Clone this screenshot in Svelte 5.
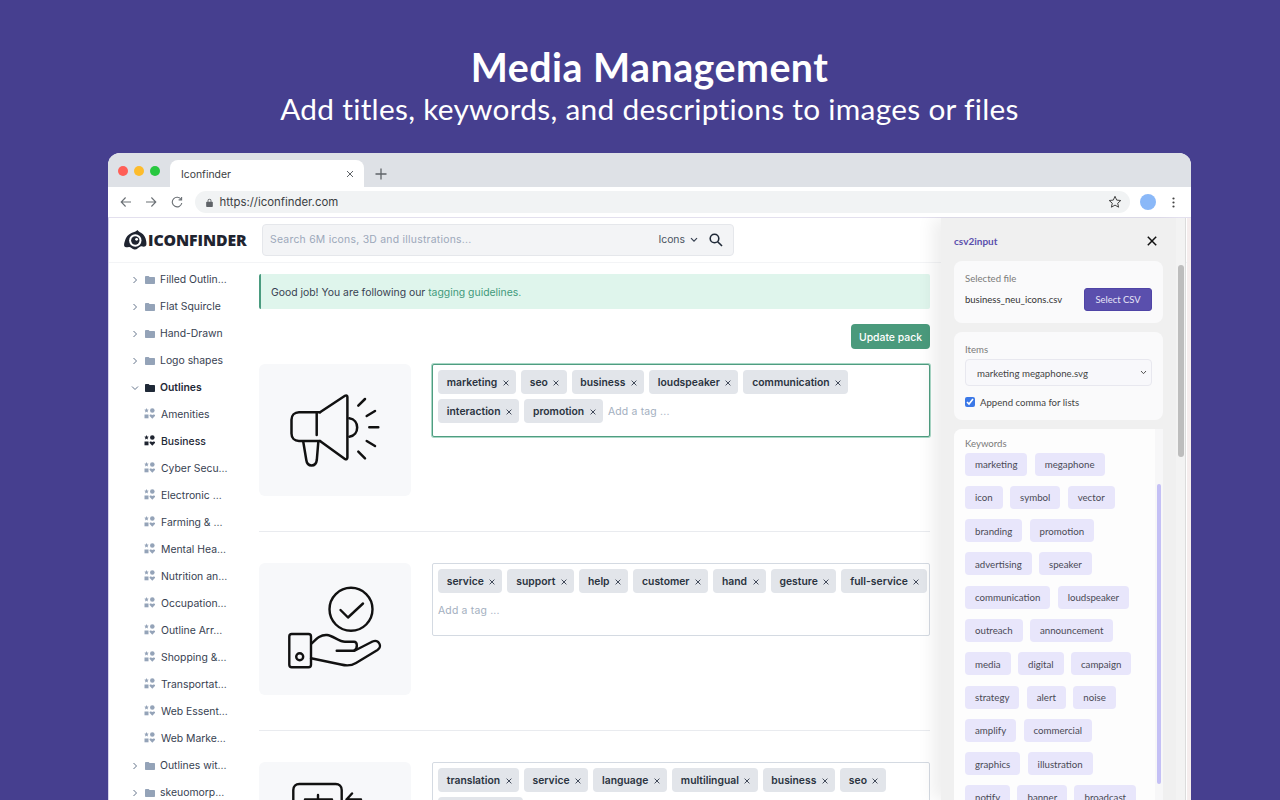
<script>
  const folders1 = ['Filled Outlin…', 'Flat Squircle', 'Hand-Drawn', 'Logo shapes'];
  const packs = ['Amenities', 'Business', 'Cyber Secu…', 'Electronic …', 'Farming & …', 'Mental Hea…', 'Nutrition an…', 'Occupation…', 'Outline Arr…', 'Shopping &…', 'Transportat…', 'Web Essent…', 'Web Marke…'];
  const folders2 = ['Outlines wit…', 'skeuomorp…'];
  const tags1 = ['marketing', 'seo', 'business', 'loudspeaker', 'communication', 'interaction', 'promotion'];
  const tags2 = ['service', 'support', 'help', 'customer', 'hand', 'gesture', 'full-service'];
  const tags3 = ['translation', 'service', 'language', 'multilingual', 'business', 'seo', 'localization'];
  const keywords = ['marketing', 'megaphone', 'icon', 'symbol', 'vector', 'branding', 'promotion', 'advertising', 'speaker', 'communication', 'loudspeaker', 'outreach', 'announcement', 'media', 'digital', 'campaign', 'strategy', 'alert', 'noise', 'amplify', 'commercial', 'graphics', 'illustration', 'notify', 'banner', 'broadcast'];
</script>

{#snippet folder(name, open)}
  <div class="side-row" class:bold={open}>
    <svg class="chev" viewBox="0 0 8 8" width="8" height="8" fill="none" stroke="#64748b" stroke-width="1">
      {#if open}<path d="M1 2.500 4 5.500 7 2.500" />{:else}<path d="M2.500 1 5.500 4 2.500 7" />{/if}
    </svg>
    <svg class="folder" viewBox="0 0 10 8" width="10" height="8" fill={open ? '#1f2937' : '#94a3b8'}>
      <path d="M0 1c0-.5.4-1 1-1h2.600l1 1H9c.6 0 1 .4 1 1v5c0 .6-.4 1-1 1H1c-.6 0-1-.4-1-1z" />
    </svg>
    <span>{name}</span>
  </div>
{/snippet}

{#snippet taglist(tags)}
  {#each tags as t}
    <span class="tag">{t}<svg viewBox="0 0 7 7" width="6" height="6" stroke="#374151" stroke-width="1.100"><path d="M.7.7 6.300 6.300M6.300.7.7 6.300" /></svg></span>
  {/each}
  <span class="adder">Add a tag ...</span>
{/snippet}

<div class="stage">
  <header class="hero">
    <h1>Media Management</h1>
    <p>Add titles, keywords, and descriptions to images or files</p>
  </header>

  <div class="window">
    <div class="tabstrip">
      <div class="lights"><i class="red"></i><i class="yellow"></i><i class="green"></i></div>
      <div class="tab">
        <span>Iconfinder</span>
        <svg viewBox="0 0 8 8" width="8" height="8" stroke="#5f6368" stroke-width="1"><path d="M1 1l6 6M7 1 1 7" /></svg>
      </div>
      <svg class="plus" viewBox="0 0 12 12" width="12" height="12" stroke="#5f6368" stroke-width="1.300"><path d="M6 .5v11M.5 6h11" /></svg>
    </div>

    <div class="toolbar">
      <svg class="nav" viewBox="0 0 12 12" width="12" height="12" fill="none" stroke="#6b7075" stroke-width="1.100"><path d="M11 6H1.200M5.600 1.500 1.200 6l4.400 4.500" /></svg>
      <svg class="nav" viewBox="0 0 12 12" width="12" height="12" fill="none" stroke="#6b7075" stroke-width="1.100"><path d="M1 6h9.800M6.400 1.500 10.800 6l-4.400 4.500" /></svg>
      <svg class="nav" viewBox="0 0 12 12" width="12" height="12" fill="none" stroke="#6b7075" stroke-width="1.100"><path d="M10.200 3.600A4.800 4.800 0 1 0 10.800 7" /><path d="M10.600 .9v3H7.600" /></svg>
      <div class="omnibox">
        <svg viewBox="0 0 8 10" width="7" height="9" fill="#5f6368"><path d="M1.800 4V2.800a2.200 2.200 0 0 1 4.400 0V4H7c.4 0 .8.3.8.8v4.400c0 .5-.4.8-.8.8H1c-.4 0-.8-.3-.8-.8V4.800c0-.5.4-.8.8-.8zM2.800 4h2.400V2.800a1.200 1.200 0 0 0-2.400 0z" /></svg>
        <span>https://iconfinder.com</span>
        <svg class="star" viewBox="0 0 14 14" width="14" height="14" fill="none" stroke="#444" stroke-width="1"><path d="M7 1.300 8.700 5.100l4.100.4-3.100 2.700.9 4-3.600-2.100-3.600 2.100.9-4L1.200 5.500l4.100-.4z" /></svg>
      </div>
      <i class="avatar"></i>
      <svg class="dots" viewBox="0 0 3 11" width="3" height="11" fill="#444"><circle cx="1.500" cy="1.500" r="1.100" /><circle cx="1.500" cy="5.500" r="1.100" /><circle cx="1.500" cy="9.500" r="1.100" /></svg>
    </div>

    <div class="viewport">
      <div class="page">
        <div class="sitehead">
          <div class="logo">
            <svg viewBox="0 0 23 20" width="23" height="20">
              <path fill="#1f2430" d="M13.500 0C14 1.200 15.500 2 17 2.800 20 4.500 21.700 7.500 22.200 11c.3 2.500.6 4.500-.9 5.300-1.700.9-3.200-.4-4.800.2C14.500 17.400 13 19.800 10.500 19.500 8 19.200 7.500 17.200 5.500 17 3.500 16.800 1.500 18 .5 16.500-.5 15 .5 12.500 1.200 10 2 7 4.200 4.500 7 3.200 9 2.300 11.500 2 13.500 0z" />
              <circle cx="11.300" cy="10.500" r="6.200" fill="#fff" />
              <circle cx="11.300" cy="10.500" r="4.200" fill="#1f2430" />
              <circle cx="12.600" cy="9.300" r="1.400" fill="#fff" />
            </svg>
            <span>ICONFINDER</span>
          </div>
          <div class="search">
            <span class="ph">Search 6M icons, 3D and illustrations...</span>
            <span class="kind">Icons</span>
            <svg class="kind-chev" viewBox="0 0 8 6" width="8" height="6" fill="none" stroke="#374151" stroke-width="1.200"><path d="M1 1.200 4 4.200 7 1.200" /></svg>
            <svg class="mag" viewBox="0 0 14 14" width="14" height="14" fill="none" stroke="#1f2937" stroke-width="1.600"><circle cx="5.500" cy="5.500" r="4.300" /><path d="M8.700 8.700 13 13" /></svg>
          </div>
        </div>

        <div class="columns">
          <nav class="sidebar">
            {#each folders1 as f}{@render folder(f, false)}{/each}
            {@render folder('Outlines', true)}
            {#each packs as p}
              <div class="side-row pack" class:current={p === 'Business'}>
                <svg viewBox="0 0 11 11" width="11" height="11">
                  <path d="M2.500 0l.7 1.500 1.600.2-1.200 1.100.3 1.700-1.400-.8-1.400.8.3-1.700L.2 1.700l1.600-.2z" />
                  <circle cx="8.300" cy="2.500" r="2.300" />
                  <rect x=".5" y="6.500" width="4" height="3.800" />
                  <path d="M8.300 10.800 5.900 8.200c-.9-1 .1-2 1.100-1.700l1.300.6 1.300-.6c1-.3 2 .7 1.100 1.700z" />
                </svg>
                <span>{p}</span>
              </div>
            {/each}
            {#each folders2 as f}{@render folder(f, false)}{/each}
          </nav>

          <main class="main">
            <div class="alert">Good job! You are following our <a href="#guide">tagging guidelines.</a></div>
            <div class="actions"><button type="button">Update pack</button></div>

            <section class="row">
              <div class="thumb">
                <svg viewBox="0 0 152 132" width="152" height="132" fill="none" stroke="#111" stroke-width="2.500" stroke-linecap="round" stroke-linejoin="round">
                  <path d="M61 48.300H40c-4.500 0-7.500 3.200-7.500 7.500V69.500c0 4.500 3 7.500 7.500 7.500h21" />
                  <path d="M61 48.300 86 31.800c1.300-.8 2.400-.2 2.400 1.200V93.500c0 1.500-1.200 2.300-2.500 1.500L61 77" />
                  <path d="M57.700 49.500V71" />
                  <path d="M44.300 78 47.300 96c1 7.300 9.600 7.300 10.500 0L59.300 78" />
                  <path d="M90.300 54.300c10.500 1.500 10.500 17 0 18.400" />
                  <path d="M99.300 41.700 106 35M107.700 52 116 47M110.300 63.300H119.300M107.700 77 116 82M99.300 87.700 106 94.300" />
                </svg>
              </div>
              <div class="tagbox active">{@render taglist(tags1)}</div>
            </section>

            <section class="row">
              <div class="thumb">
                <svg viewBox="0 0 152 132" width="152" height="132" fill="none" stroke="#111" stroke-width="2.400" stroke-linecap="round" stroke-linejoin="round">
                  <circle cx="92" cy="46.300" r="21.500" />
                  <path d="M81.500 47 89 54.500 104 40.500" />
                  <rect x="30.300" y="71" width="21.700" height="33.300" rx="2.500" />
                  <circle cx="40.700" cy="93.700" r="3.500" />
                  <path d="M52.700 80.500C58 75 62 71.500 68 72c6 .5 12 6.700 18 6.700h9c3.600 0 3.800 6.500.5 8.500" />
                  <path d="M77.700 87.700H95.500L113.500 78.500c6-2.500 10.500 5 5 8.500L97 100c-5 3-10 2.800-15 1.500L52 95.300" />
                </svg>
              </div>
              <div class="tagbox">{@render taglist(tags2)}</div>
            </section>

            <section class="row">
              <div class="thumb">
                <svg viewBox="0 0 152 132" width="152" height="132" fill="none" stroke="#111" stroke-width="2.400" stroke-linecap="round" stroke-linejoin="round">
                  <path d="M34.300 50V28c0-3.500 2.500-6 6-6h36.400c3.500 0 6 2.500 6 6v22" />
                  <path d="M46 37.500H73M59 33V37.500" />
                  <path d="M87.500 37.500 93 31.500M87.500 37.500 102 37.500" />
                </svg>
              </div>
              <div class="tagbox">{@render taglist(tags3)}</div>
            </section>
          </main>
        </div>
      </div>

      <aside class="panel">
        <div class="panel-body">
          <div class="panel-head">
            <strong>csv2input</strong>
            <svg viewBox="0 0 10 10" width="10" height="10" stroke="#111" stroke-width="1.500"><path d="M.8.8l8.400 8.400M9.200.8.8 9.200" /></svg>
          </div>

          <div class="card file">
            <div class="label">Selected file</div>
            <div class="file-row">
              <span>business_neu_icons.csv</span>
              <button type="button">Select CSV</button>
            </div>
          </div>

          <div class="card items">
            <div class="label">Items</div>
            <div class="select">
              <span>marketing megaphone.svg</span>
              <svg viewBox="0 0 8 6" width="7" height="5" fill="none" stroke="#444" stroke-width="1.100"><path d="M1 1.200 4 4.400 7 1.200" /></svg>
            </div>
            <label class="check"><input type="checkbox" checked /><span>Append comma for lists</span></label>
          </div>

          <div class="keywords">
            <div class="kw-inner">
              <div class="label">Keywords</div>
              <div class="chips">
                {#each keywords as k}<span class="chip">{k}</span>{/each}
              </div>
            </div>
            <div class="kw-track"><i></i></div>
          </div>
        </div>
        <div class="panel-scroll"><i></i></div>
      </aside>
    </div>
  </div>
</div>

<style>
  :global(body) { margin: 0; background: #463f8f; overflow: hidden; }
  .stage { height: 800px; overflow: hidden; background: #463f8f; padding-left: 108px; width: 1172px; font-family: Inter, sans-serif; }
  .hero { width: 1083px; height: 153px; padding-top: 42px; box-sizing: border-box; text-align: center; color: #fff; font-family: Lato, sans-serif; }
  .hero h1 { margin: 0; font-size: 39.300px; line-height: 50px; font-weight: 700; letter-spacing: .5px; }
  .hero p { margin: -3px 0 0; font-size: 29.800px; line-height: 40px; font-weight: 400; letter-spacing: .3px; }

  .window { width: 1083px; height: 647px; background: #fff; border-radius: 12px 12px 0 0; overflow: hidden; display: flex; flex-direction: column; }
  .tabstrip { height: 34px; background: #dee1e6; display: flex; align-items: flex-end; flex: none; }
  .lights { display: flex; gap: 6px; align-self: flex-start; margin: 13px 0 0 10px; width: 52px; }
  .lights i { width: 10px; height: 10px; border-radius: 50%; display: block; }
  .red { background: #ff5f57; }
  .yellow { background: #fdbc2c; }
  .green { background: #28c840; }
  .tab { width: 194px; height: 27px; box-sizing: border-box; background: #fff; border-radius: 8px 8px 0 0; display: flex; align-items: center; justify-content: space-between; padding: 1px 10px 0 11px; font-size: 10.400px; color: #3c4043; }
  .plus { margin: 0 0 7px 11px; }

  .toolbar { height: 30px; flex: none; display: flex; align-items: center; padding-left: 12px; background: #fff; box-sizing: border-box; }
  .nav { margin-right: 13px; }
  .nav:nth-child(2) { margin-right: 14px; }
  .nav:nth-child(3) { margin-right: 11.500px; }
  .omnibox { width: 935px; height: 22px; background: #f1f3f4; border-radius: 11px; display: flex; align-items: center; padding: 0 8px 0 11px; box-sizing: border-box; font-size: 11.400px; color: #3c4043; gap: 7px; font-family: Inter, sans-serif; }
  .star { margin-left: auto; }
  .avatar { width: 16px; height: 16px; border-radius: 50%; background: #8ab8f8; margin-left: 10px; display: block; }
  .dots { margin-left: 16px; }

  .viewport { flex: 1; position: relative; min-height: 0; overflow: hidden; background: #f5eded; padding-right: 4px; box-shadow: inset 0 1px 0 #e3e0ee; }
  .page { height: 100%; background: #fff; border-left: 1px solid #d6d3ea; border-top: 1px solid #e3e0ee; box-sizing: border-box; }
  .sitehead { height: 45px; padding-bottom: 1px; display: flex; align-items: center; border-bottom: 1px solid #f3f4f6; box-sizing: border-box; }
  .logo { display: flex; align-items: center; margin-left: 15px; width: 138px; gap: 1px; font-family: "Open Sans", sans-serif; font-weight: 800; font-size: 15.800px; color: #1f2430; letter-spacing: -.1px; }
  .search { width: 472px; height: 32px; box-sizing: border-box; background: #f3f4f6; border: 1px solid #e5e7eb; border-radius: 4px; display: flex; align-items: center; padding: 0 10px 0 7px; font-size: 10.400px; }
  .ph { color: #9ca8ba; letter-spacing: .25px; flex: 1; }
  .kind { color: #4b5563; font-size: 10.400px; }
  .kind-chev { margin: 0 11px 0 5px; }

  .columns { display: grid; grid-template-columns: 150px 671px; }
  .sidebar { padding-top: 3px; }
  .side-row { height: 27px; display: flex; align-items: center; padding-left: 22px; font-size: 10.400px; color: #374151; white-space: nowrap; }
  .chev { margin-right: 5.500px; flex: none; }
  .folder { margin-right: 5.500px; flex: none; }
  .bold { font-weight: 600; color: #1f2937; }
  .pack { padding-left: 35px; }
  .pack svg { fill: #94a3b8; margin-right: 6px; flex: none; position: relative; top: -1px; }
  .pack.current { font-weight: 500; color: #1f2937; }
  .pack.current svg { fill: #1f2430; }

  .main { padding-top: 11px; }
  .alert { height: 35px; box-sizing: border-box; background: #dff5ec; border-left: 2px solid #4a9b7f; border-radius: 2px; display: flex; align-items: center; padding: 1px 0 0 10px; font-size: 10.400px; color: #374151; white-space: pre-wrap; }
  .alert a { color: #3f9a7b; text-decoration: none; }
  .actions { display: flex; justify-content: flex-end; margin-top: 15px; }
  .actions button { width: 79px; height: 25px; border: 0; border-radius: 4px; background: #4a9a7c; color: #fff; font: 500 10.400px Inter, sans-serif; padding: 1px 0 0; }
  .row { display: flex; gap: 21px; align-items: flex-start; height: 132px; padding-bottom: 35px; margin-bottom: 31px; border-bottom: 1px solid #e9ebef; }
  .actions + .row { margin-top: 15px; }
  .thumb { width: 152px; height: 132px; flex: none; background: #f7f8fa; border-radius: 6px; }
  .thumb svg { display: block; }
  .tagbox { flex: 1; height: 73px; box-sizing: border-box; border: 1px solid #d4dae2; border-radius: 2px; padding: 5px 2px 5px 5px; display: flex; flex-wrap: wrap; align-content: flex-start; gap: 5px; background: #fff; }
  .tagbox.active { border-color: #4f9d81; box-shadow: 0 0 0 1px #a9d8c6; }
  .tag { height: 24px; box-sizing: border-box; background: #e2e5ea; border-radius: 4px; padding: 0 7.200px 0 8.800px; display: inline-flex; align-items: center; font-size: 10.350px; font-weight: 600; color: #2a3340; gap: 5.500px; }
  .tag svg { position: relative; top: 1px; }
  .adder { height: 24px; display: inline-flex; align-items: center; padding-top: 1px; box-sizing: border-box; font-size: 10.400px; color: #a3afc0; letter-spacing: .2px; }

  .panel { position: absolute; top: 1px; right: 5px; bottom: 0; width: 245px; display: flex; font-family: Lato, sans-serif; color: #444; }
  .panel-body { width: 235px; background: #f0f0f0; box-shadow: -8px 0 16px rgba(0, 0, 0, .07); padding: 0 13px; box-sizing: border-box; overflow: hidden; }
  .panel-scroll { width: 10px; background: #f3f3f3; border-right: 1px solid #dcdcdc; box-sizing: border-box; padding-top: 47px; padding-left: 2px; }
  .panel-scroll i { display: block; width: 6px; height: 192px; background: #bdbdbd; border-radius: 3px; }
  .panel-head { height: 43px; display: flex; align-items: center; justify-content: space-between; padding: 3px 6.500px 0 0; box-sizing: border-box; }
  .panel-head strong { font-size: 10px; color: #5a4fad; font-weight: 700; }
  .card { background: #fafafb; border-radius: 8px; padding: 0 11px; margin-bottom: 9px; box-sizing: border-box; }
  .label { font-size: 9.600px; color: #7a7a7a; }
  .file { height: 62px; padding-top: 12px; }
  .file-row { display: flex; align-items: center; justify-content: space-between; margin-top: 4px; font-size: 9.500px; color: #333; }
  .file-row button { width: 68px; height: 23px; padding: 0; border: 1px solid #4f44a6; border-radius: 3px; background: #5a4fad; color: #e8e6f8; font: 400 9.400px Lato, sans-serif; }
  .items { height: 88px; padding-top: 12px; }
  .select { height: 27px; margin-top: 4px; box-sizing: border-box; border: 1px solid #e8e8ef; border-radius: 4px; background: #f8f8fb; display: flex; align-items: center; justify-content: space-between; padding: 0 4px 0 11px; font-size: 9.700px; color: #444; }
  .check { display: flex; align-items: center; gap: 5px; margin-top: 10.500px; font-size: 9.600px; color: #444; }
  .check input { width: 10px; height: 10px; margin: 0; accent-color: #3b78e7; }
  .keywords { display: flex; height: 380px; border-radius: 8px 0 0 0; background: #f7f7f8; }
  .kw-inner { width: 201px; background: #fdfdfd; border-radius: 8px 0 0 0; padding: 9px 15px 0 11px; box-sizing: border-box; flex: none; }
  .kw-track { flex: 1; padding: 55px 2px 0; }
  .kw-track i { display: block; width: 4px; height: 300px; background: #c4c0f5; border-radius: 2px; }
  .chips { display: flex; flex-wrap: wrap; gap: 10.300px 7.300px; margin-top: 3.500px; }
  .chip { height: 23px; padding: 0 10px; box-sizing: border-box; background: #e8e6fb; border-radius: 4px; display: inline-flex; align-items: center; font-size: 9.700px; color: #4a4a55; }
</style>
